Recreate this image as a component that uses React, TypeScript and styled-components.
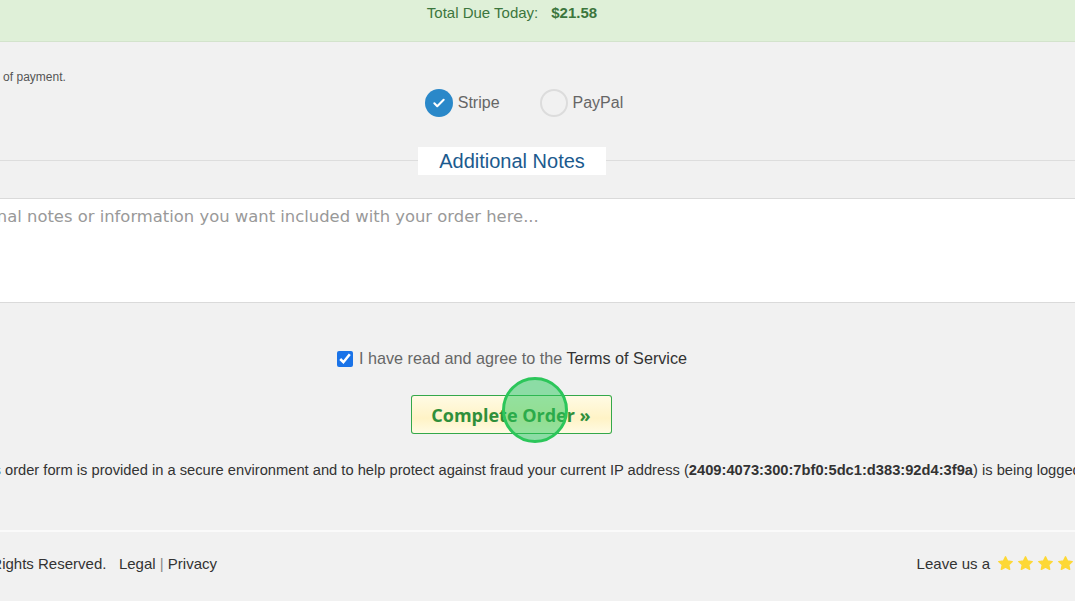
import { createGlobalStyle, styled } from "styled-components";

const GlobalStyle = createGlobalStyle`
  html, body {
    margin: 0;
    padding: 0;
    background: #f1f1f1;
    overflow: hidden;
    font-family: "Liberation Sans", Arial, sans-serif;
  }
`;

const Page = styled.div`
  position: relative;
  width: 1075px;
  height: 601px;
  overflow: hidden;
  background: #f1f1f1;
`;

const TotalBar = styled.div`
  height: 41px;
  background: #dff0d8;
  border-bottom: 1px solid #d3e3cc;
`;

const TotalInner = styled.div`
  width: 1400px;
  margin-left: -188px;
  display: flex;
  justify-content: center;
  padding-top: 4px;
  font-size: 15px;
  color: #3c763d;
  gap: 13px;

  strong {
    font-weight: bold;
  }
`;

const Wide = styled.div`
  width: 1400px;
  margin-left: -188px;
`;

const Hint = styled.p`
  margin: 0 0 0 -13px;
  padding: 28px 0 0 0;
  font-size: 12px;
  color: #555;
  line-height: 14px;
`;

const Choices = styled.div`
  display: flex;
  justify-content: center;
  gap: 40px;
  padding-left: 24px;
  margin-top: 5px;
`;

const Choice = styled.label`
  display: flex;
  align-items: center;
  gap: 5px;
  font-size: 16px;
  color: #666;
`;

const Dot = styled.span<{ $on?: boolean }>`
  width: 28px;
  height: 28px;
  border-radius: 50%;
  box-sizing: border-box;
  display: flex;
  align-items: center;
  justify-content: center;
  background: ${(p) => (p.$on ? "#2a88c9" : "transparent")};
  border: ${(p) => (p.$on ? "none" : "2px solid #dcdcdc")};
`;

const SectionHead = styled.div`
  margin-top: 30px;
  height: 28px;
  display: flex;
  justify-content: center;
  align-items: center;
  background: linear-gradient(#f1f1f1 0 13px, #dddddd 13px 14px, #f1f1f1 14px);
`;

const SectionTitle = styled.h2`
  margin: 0;
  width: 188px;
  height: 28px;
  background: #fff;
  font-size: 20px;
  font-weight: normal;
  color: #1b5a8e;
  text-align: center;
  line-height: 29px;
`;

const Notes = styled.textarea`
  display: block;
  margin: 23px 0 0 -37px;
  width: calc(100% + 37px);
  height: 105px;
  box-sizing: border-box;
  border: 1px solid #dadada;
  background: #fff;
  padding: 8px 12px;
  resize: none;
  font-family: "DejaVu Sans", Tahoma, sans-serif;
  font-size: 16.4px;

  &::placeholder {
    color: #999;
  }
`;

const Terms = styled.label`
  margin-top: 46px;
  display: flex;
  justify-content: center;
  align-items: center;
  gap: 6px;
  font-size: 16.2px;
  color: #666;

  span b {
    font-weight: normal;
    color: #333;
  }
`;

const Check = styled.input`
  width: 16px;
  height: 16px;
  margin: 0;
  accent-color: #1a73e8;
`;

const ButtonRow = styled.div`
  margin-top: 27px;
  display: flex;
  justify-content: center;
  padding-right: 2px;
`;

const OrderButton = styled.button`
  position: relative;
  appearance: none;
  width: 201px;
  height: 39px;
  border: none;
  box-shadow: inset 0 0 0 1px #34a84a;
  border-radius: 3px;
  background: linear-gradient(#fffbe6, #fff3c6 60%, #fffbe6);
  color: #2f8f3b;
  font-family: "Open Sans", sans-serif;
  font-weight: 700;
  font-size: 18px;
  cursor: pointer;
  outline: none;
`;

const ClickMark = styled.span`
  position: absolute;
  left: 91px;
  top: -18px;
  width: 60px;
  height: 60px;
  border-radius: 50%;
  border: 3px solid #2cc65a;
  background: rgba(40, 200, 90, 0.5);
  pointer-events: none;
`;

const Secure = styled.p`
  margin: 28px 0 0 0;
  padding-left: 34px;
  text-align: center;
  white-space: nowrap;
  font-size: 14.7px;
  color: #333;
`;

const Footer = styled.footer`
  margin-top: 52px;
  border-top: 2px solid #fafafa;
`;

const FooterInner = styled.div`
  width: 1328px;
  margin-left: -234px;
  display: flex;
  justify-content: space-between;
  align-items: center;
  padding-top: 23px;
  font-size: 15px;
  color: #333;
`;

const Links = styled.span`
  a {
    color: #333;
    text-decoration: none;
  }
  i {
    font-style: normal;
    color: #888;
  }
`;

const Stars = styled.span`
  display: flex;
  align-items: center;
  gap: 3px;

  svg:first-of-type {
    margin-left: 4px;
  }
`;

function Star() {
  return (
    <svg width="17" height="17" viewBox="0 0 24 24">
      <path
        d="M12 2.5l2.9 6 6.6.8-4.9 4.5 1.3 6.5L12 17l-5.9 3.3 1.3-6.5-4.9-4.5 6.6-.8z"
        fill="#fdd835"
        stroke="#fdd835"
        strokeWidth="2"
        strokeLinejoin="round"
      />
    </svg>
  );
}

export default function App() {
  return (
    <Page>
      <GlobalStyle />
      <TotalBar>
        <TotalInner>
          <span>Total Due Today:</span>
          <strong>$21.58</strong>
        </TotalInner>
      </TotalBar>
      <Wide>
        <Hint>Please choose your preferred method of payment.</Hint>
        <Choices>
          <Choice>
            <Dot $on>
              <svg width="14" height="14" viewBox="0 0 24 24">
                <path d="M4 12.5l5 5L20 6.5" fill="none" stroke="#fff" strokeWidth="3.5" strokeLinecap="round" strokeLinejoin="round" />
              </svg>
            </Dot>
            Stripe
          </Choice>
          <Choice>
            <Dot />
            PayPal
          </Choice>
        </Choices>
        <SectionHead>
          <SectionTitle>Additional Notes</SectionTitle>
        </SectionHead>
        <Notes placeholder="You can enter any additional notes or information you want included with your order here..." />
        <Terms>
          <Check type="checkbox" defaultChecked />
          <span>
            I have read and agree to the <b>Terms of Service</b>
          </span>
        </Terms>
        <ButtonRow>
          <OrderButton>
            Complete Order »
            <ClickMark />
          </OrderButton>
        </ButtonRow>
        <Secure>
          This order form is provided in a secure environment and to help protect against fraud your current IP address (
          <b>2409:4073:300:7bf0:5dc1:d383:92d4:3f9a</b>) is being logged.
        </Secure>
      </Wide>
      <Footer>
        <FooterInner>
          <Links>
            Copyright © 2024 Hosting Ltd. All Rights Reserved. &nbsp; <a href="#">Legal</a> <i>|</i> <a href="#">Privacy</a>
          </Links>
          <Stars>
            Leave us a
            <Star />
            <Star />
            <Star />
            <Star />
            <Star />
          </Stars>
        </FooterInner>
      </Footer>
    </Page>
  );
}
